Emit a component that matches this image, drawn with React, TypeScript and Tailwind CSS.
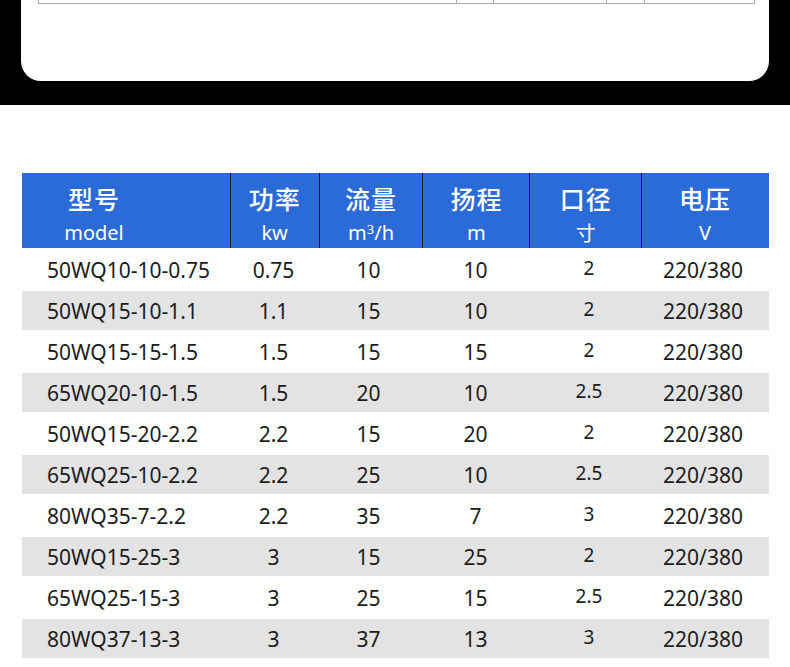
const rows = [
  ["50WQ10-10-0.75", "0.75", "10", "10", "2"],
  ["50WQ15-10-1.1", "1.1", "15", "10", "2"],
  ["50WQ15-15-1.5", "1.5", "15", "15", "2"],
  ["65WQ20-10-1.5", "1.5", "20", "10", "2.5"],
  ["50WQ15-20-2.2", "2.2", "15", "20", "2"],
  ["65WQ25-10-2.2", "2.2", "25", "10", "2.5"],
  ["80WQ35-7-2.2", "2.2", "35", "7", "3"],
  ["50WQ15-25-3", "3", "15", "25", "2"],
  ["65WQ25-15-3", "3", "25", "15", "2.5"],
  ["80WQ37-13-3", "3", "37", "13", "3"],
];

const widths = ["w-[207px]", "w-[89px]", "w-[104px]", "w-[107px]", "w-[112px]", "w-[127px]"];

function HeaderCell({ cn, en, i }: { cn: string; en: React.ReactNode; i: number }) {
  return (
    <div
      className={`${widths[i]} flex h-full flex-col ${i === 0 ? "items-start" : "items-center border-l border-[#111]"}`}
    >
      <div className={`flex flex-col items-center ${i === 0 ? "w-[142px]" : ""}`}>
        <span className="mt-[8px] text-[25px] leading-[34px] font-medium tracking-[1px]">{cn}</span>
        <span className="mt-[5px] text-[20px] leading-[26px] font-['Noto_Sans','Noto_Sans_CJK_SC',sans-serif]">
          {en}
        </span>
      </div>
    </div>
  );
}

function Row({ r, idx }: { r: string[]; idx: number }) {
  const gray = idx % 2 === 1;
  return (
    <div
      className={`flex items-center text-[#1c1c1c] ${gray ? "h-[39px] bg-[#e3e3e3]" : "h-[43px] bg-white"}`}
    >
      <div className={`${widths[0]} pl-[25px] pt-[2px]`}>{r[0]}</div>
      <div className={`${widths[1]} pt-[2px] text-center`}>{r[1]}</div>
      <div className={`${widths[2]} pt-[2px] pr-[3px] text-center`}>{r[2]}</div>
      <div className={`${widths[3]} pt-[2px] text-center`}>{r[3]}</div>
      <div className={`${widths[4]} pb-[3px] pl-[8px] text-center text-[19px]`}>{r[4]}</div>
      <div className={`${widths[5]} pt-[2px] pr-[3px] text-center`}>220/380</div>
    </div>
  );
}

export default function App() {
  return (
    <div className="h-[667px] w-[790px] overflow-hidden bg-white font-['Noto_Sans','Noto_Sans_CJK_SC',sans-serif]">
      <div className="h-[105px] bg-black px-[21px]">
        <div className="h-[81px] rounded-b-[20px] bg-white">
          <div className="ml-[17px] flex h-[4px] w-[717px]">
            <div className="w-[419px] border-r border-b border-l border-[#a9a9a9]" />
            <div className="w-[37px] border-r border-b border-[#a9a9a9]" />
            <div className="w-[113px] border-r border-b border-[#a9a9a9]" />
            <div className="w-[38px] border-r border-b border-[#a9a9a9]" />
            <div className="w-[110px] border-r border-b border-[#a9a9a9]" />
          </div>
        </div>
      </div>

      <div className="mt-[68px] ml-[22px] w-[747px]">
        <div className="flex h-[75px] bg-[#2b6bd7] px-[1px] text-white font-['Noto_Sans_CJK_SC','Noto_Sans',sans-serif]">
          <HeaderCell i={0} cn="型号" en="model" />
          <HeaderCell i={1} cn="功率" en="kw" />
          <HeaderCell
            i={2}
            cn="流量"
            en={
              <span>
                m<sup className="text-[13px]">3</sup>/h
              </span>
            }
          />
          <HeaderCell i={3} cn="扬程" en="m" />
          <HeaderCell i={4} cn="口径" en={<span className="font-['Noto_Sans_CJK_SC',sans-serif]">寸</span>} />
          <HeaderCell i={5} cn="电压" en="V" />
        </div>
        <div className="text-[21px] leading-none">
          {rows.map((r, i) => (
            <Row key={r[0]} r={r} idx={i} />
          ))}
        </div>
      </div>
    </div>
  );
}
